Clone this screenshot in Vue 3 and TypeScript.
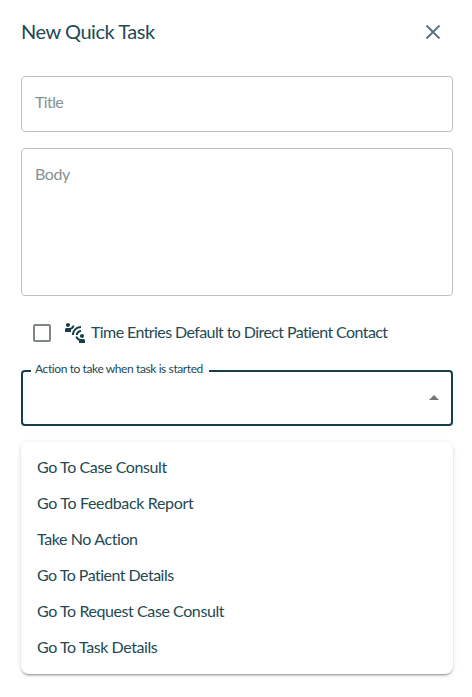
<script setup lang="ts">
import { ref } from 'vue'

const title = ref('')
const body = ref('')
const directContact = ref(false)
const actions: string[] = [
  'Go To Case Consult',
  'Go To Feedback Report',
  'Take No Action',
  'Go To Patient Details',
  'Go To Request Case Consult',
  'Go To Task Details',
]
</script>

<template>
  <main class="dialog">
    <header class="header">
      <h1>New Quick Task</h1>
      <button class="close" type="button" aria-label="Close">
        <svg viewBox="0 0 24 24" width="24" height="24"><path d="M5.5 5.5l13 13M18.5 5.5l-13 13" fill="none" stroke="#53707c" stroke-width="1.8" /></svg>
      </button>
    </header>

    <input v-model="title" class="field title" placeholder="Title" />
    <textarea v-model="body" class="field body" placeholder="Body"></textarea>

    <label class="check">
      <input v-model="directContact" type="checkbox" />
      <svg class="contact" viewBox="0 0 24 24" width="24" height="24"><path d="M11,14H9c0-4.97,4.03-9,9-9v2C14.13,7,11,10.13,11,14z M18,11V9c-2.76,0-5,2.24-5,5h2C15,12.34,16.34,11,18,11z M7,4c0-1.11-0.89-2-2-2S3,2.89,3,4s0.89,2,2,2S7,5.11,7,4z M11.45,4.5h-2C9.21,5.92,7.99,7,6.5,7h-3C2.67,7,2,7.67,2,8.5V11h6V8.74C9.86,8.15,11.25,6.51,11.45,4.5z M19,17c1.11,0,2-0.89,2-2s-0.89-2-2-2s-2,0.89-2,2S17.89,17,19,17z M20.5,18h-3c-1.49,0-2.71-1.08-2.95-2.5h-2c0.2,2.01,1.59,3.65,3.45,4.24V22h6v-2.5C22,18.67,21.33,18,20.5,18z" /></svg>
      <span>Time Entries Default to Direct Patient Contact</span>
    </label>

    <fieldset class="select">
      <legend>Action to take when task is started</legend>
      <svg class="arrow" viewBox="0 0 24 24" width="24" height="24"><path d="M7 14l5-5 5 5z" /></svg>
    </fieldset>

    <ul class="menu">
      <li v-for="action in actions" :key="action"><span>{{ action }}</span></li>
    </ul>
  </main>
</template>

<style>
body {
  background: #fff;
}
</style>

<style scoped>
.dialog {
  box-sizing: border-box;
  display: flex;
  flex-direction: column;
  height: 697px;
  padding: 12px 19px 23px 21px;
  overflow: hidden;
  color: #234953;
  font-family: Lato, "Liberation Sans", sans-serif;
  font-size: 16px;
  letter-spacing: -0.4px;
}
.header {
  display: flex;
  align-items: center;
  justify-content: space-between;
  height: 40px;
  margin-bottom: 24px;
}
h1 {
  margin: 0;
  padding-bottom: 3px;
  font-size: 20px;
  font-weight: 400;
  line-height: 24px;
  letter-spacing: -0.46px;
}
.close {
  display: flex;
  margin-right: 8px;
  padding: 0;
  border: 0;
  background: none;
}
.field {
  box-sizing: border-box;
  display: block;
  flex: none;
  width: 100%;
  margin: 0;
  border: 1px solid #bfc1c1;
  border-radius: 4px;
  outline: none;
  background: transparent;
  color: inherit;
  font: inherit;
  letter-spacing: inherit;
  resize: none;
}
.field::placeholder {
  color: #849294;
  opacity: 1;
}
.title {
  height: 56px;
  padding: 0 13px 5px;
  letter-spacing: -0.6px;
}
.body {
  height: 148px;
  margin-top: 16px;
  padding: 13px 13px;
  line-height: 23px;
}
.check {
  display: flex;
  align-items: center;
  height: 42px;
  margin-top: 16px;
  padding-left: 12px;
}
.check input {
  box-sizing: border-box;
  width: 18px;
  height: 18px;
  margin: 0;
  border: 2px solid #7d8788;
  border-radius: 2px;
  appearance: none;
}
.check input:checked {
  background: #173f49;
}
.check span {
  padding-bottom: 4px;
  letter-spacing: -0.59px;
}
.contact {
  margin: 0 4px 0 12px;
  fill: #173f49;
}
.select {
  box-sizing: border-box;
  height: 63px;
  min-width: 0;
  margin: 9px 0 0;
  padding: 0 5px 0 8px;
  border: 2px solid #173f49;
  border-radius: 4px;
}
.select legend {
  height: 16px;
  padding: 0 6px 0 4px;
  font-size: 12px;
  line-height: 12px;
  letter-spacing: -0.4px;
}
.arrow {
  display: block;
  margin: 7px 0 0 auto;
  fill: #757575;
}
.menu {
  margin: 16px 0 0;
  padding: 8px 0;
  border-radius: 8px;
  box-shadow: 0 3px 1px -2px #0003, 0 2px 2px #00000024, 0 1px 5px #0000001f;
  list-style: none;
}
.menu li {
  display: flex;
  align-items: center;
  height: 36px;
  padding: 0 16px;
}
.menu li:nth-child(2) {
  letter-spacing: -0.34px;
}
.menu li:nth-child(4) {
  letter-spacing: -0.52px;
}
.menu li:nth-child(n + 5) {
  letter-spacing: -0.42px;
}
.menu span {
  margin-top: -4px;
}
</style>
